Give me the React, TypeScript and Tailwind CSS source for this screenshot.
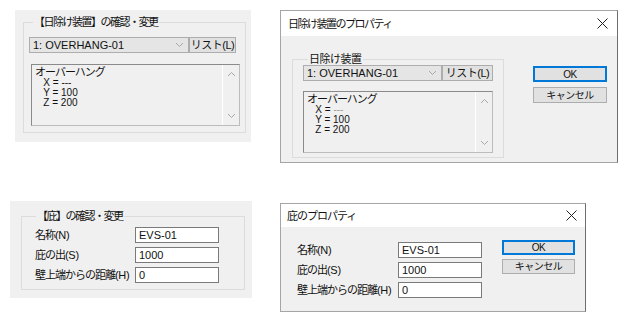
import React from "react";

const F = "font-['Liberation_Sans','Noto_Sans_CJK_JP',sans-serif]";

function Chevron({ up = false, className = "" }: { up?: boolean; className?: string }) {
  return (
    <svg width="9" height="6" viewBox="0 0 9 6" className={className}>
      {up ? (
        <polyline points="1,5 4.5,1.5 8,5" fill="none" stroke="#a8a8a8" strokeWidth="1" />
      ) : (
        <polyline points="1,1 4.5,4.5 8,1" fill="none" stroke="#a8a8a8" strokeWidth="1" />
      )}
    </svg>
  );
}

function CloseX() {
  return (
    <svg width="11" height="11" viewBox="0 0 11 11">
      <line x1="0.5" y1="0.5" x2="10.5" y2="10.5" stroke="#222" strokeWidth="1" />
      <line x1="10.5" y1="0.5" x2="0.5" y2="10.5" stroke="#222" strokeWidth="1" />
    </svg>
  );
}

function Combo({ w, btnW }: { w: string; btnW: string }) {
  return (
    <div className="flex">
      <div className={`${w} h-[16px] bg-[#e5e5e5] border border-[#adadad] flex items-center justify-between pl-[3px] pr-[4px] text-[11px] leading-[12px] text-[#111] whitespace-nowrap`}>
        <span>1: OVERHANG-01</span>
        <Chevron />
      </div>
      <div className={`${btnW} h-[16px] bg-[#e1e1e1] border border-[#adadad] flex items-center justify-center text-[11px] leading-[12px] tracking-[-0.5px] text-[#111] whitespace-nowrap`}>
        リスト(L)
      </div>
    </div>
  );
}

function InfoBox({ w, grayDash = false }: { w: string; grayDash?: boolean }) {
  return (
    <div className={`${w} h-[62px] bg-[#f0f0f0] border border-[#8a8a8a] border-r-[#bcbcbc] border-b-[#bcbcbc] flex`}>
      <div className="flex-1 pl-[3px] pt-[1px] text-[#111]">
        <div className="text-[11px] leading-[12px] tracking-[-1px] whitespace-nowrap">オーバーハング</div>
        <div className="text-[10px] leading-[10px] whitespace-pre">
          {"   X = "}
          <span className={grayDash ? "text-[#9a9a9a]" : ""}>---</span>
        </div>
        <div className="text-[10px] leading-[10px] whitespace-pre">{"   Y = 100"}</div>
        <div className="text-[10px] leading-[10px] whitespace-pre">{"   Z = 200"}</div>
      </div>
      <div className="w-[17px] border-l border-l-white flex flex-col items-center justify-between py-[6px]">
        <Chevron up />
        <Chevron />
      </div>
    </div>
  );
}

function Btn({ children, def = false, w, h }: { children: React.ReactNode; def?: boolean; w: string; h: string }) {
  return (
    <div
      className={`${w} ${h} bg-[#e1e1e1] flex items-center justify-center text-[10px] leading-[11px] tracking-[-0.5px] text-[#111] whitespace-nowrap ${
        def ? "border-2 border-[#0078d7]" : "border border-[#adadad]"
      }`}
    >
      {children}
    </div>
  );
}

function Field({ value, label, key2, labelW }: { value: string; label: string; key2: string; labelW: string }) {
  return (
    <div className="flex items-center h-[16px]">
      <div className={`${labelW} text-[11px] leading-[12px] text-[#111] whitespace-nowrap`}>
        <span className="tracking-[-1px]">{label}</span>
        <span className="tracking-[-0.3px]">{key2}</span>
      </div>
      <div className="w-[84px] h-[16px] bg-white border border-[#7a7a7a] flex items-center pl-[3px] text-[11px] leading-[12px] text-[#111]">
        {value}
      </div>
    </div>
  );
}

export default function App() {
  return (
    <div className={`relative w-[632px] h-[322px] bg-white overflow-hidden ${F}`}>
      {/* Top-left panel */}
      <div className="absolute left-[15px] top-[10px] w-[236px] h-[132px] bg-[#f0f0f0] pt-[6px] pl-[8px] pr-[6px]">
        <fieldset className="border border-[#dcdcdc] h-[117px] px-[5px]">
          <legend className="ml-[4px] px-[1px] text-[11px] leading-[12px] tracking-[-1.5px] text-[#111] whitespace-nowrap">【日除け装置】の確認・変更</legend>
          <div className="mt-[9px]">
            <Combo w="w-[160px]" btnW="w-[47px]" />
          </div>
          <div className="mt-[11px] ml-[2px]">
            <InfoBox w="w-[209px]" />
          </div>
        </fieldset>
      </div>

      {/* Top-right dialog */}
      <div className="absolute left-[280px] top-[10px] w-[338px] h-[153px] border border-[#a5a5a5] border-r-[#6e6e6e] flex flex-col bg-[#f0f0f0]">
        <div className="h-[25px] bg-white flex items-center justify-between pl-[7px] pr-[9px] shrink-0">
          <span className="text-[11px] leading-[12px] tracking-[-1.5px] text-[#111] whitespace-nowrap">日除け装置のプロパティ</span>
          <CloseX />
        </div>
        <div className="flex pl-[11px] pt-[17px]">
          <fieldset className="w-[211px] h-[105px] border border-[#dcdcdc] px-[10px]">
            <legend className="ml-[5px] px-[1px] text-[11px] leading-[12px] tracking-[-0.5px] text-[#111] whitespace-nowrap">日除け装置</legend>
            <Combo w="w-[139px]" btnW="w-[51px]" />
            <div className="mt-[10px]">
              <InfoBox w="w-[190px]" grayDash />
            </div>
          </fieldset>
          <div className="ml-[29px] pt-[13px] flex flex-col gap-[5px]">
            <Btn def w="w-[74px]" h="h-[16px]">OK</Btn>
            <Btn w="w-[74px]" h="h-[16px]">キャンセル</Btn>
          </div>
        </div>
      </div>

      {/* Bottom-left panel */}
      <div className="absolute left-[10px] top-[201px] w-[242px] h-[97px] bg-[#f0f0f0] pt-[9px] pl-[11px]">
        <fieldset className="w-[224px] h-[80px] border border-[#dcdcdc] pl-[13px]">
          <legend className="ml-[1px] px-[1px] text-[11px] leading-[12px] tracking-[-1.5px] text-[#111] whitespace-nowrap">【庇】の確認・変更</legend>
          <div className="mt-[5px] flex flex-col gap-[4px]">
            <Field label="名称" key2="(N)" value="EVS-01" labelW="w-[100px]" />
            <Field label="庇の出" key2="(S)" value="1000" labelW="w-[100px]" />
            <Field label="壁上端からの距離" key2="(H)" value="0" labelW="w-[100px]" />
          </div>
        </fieldset>
      </div>

      {/* Bottom-right dialog */}
      <div className="absolute left-[280px] top-[203px] w-[306px] h-[109px] border border-[#a5a5a5] border-r-[#6e6e6e] flex flex-col bg-[#f0f0f0]">
        <div className="h-[23px] bg-white flex items-center justify-between pl-[6px] pr-[8px] shrink-0">
          <span className="text-[11px] leading-[12px] tracking-[-1px] text-[#111] whitespace-nowrap">庇のプロパティ</span>
          <CloseX />
        </div>
        <div className="flex pl-[16px] pt-[15px]">
          <div className="flex flex-col gap-[4px]">
            <Field label="名称" key2="(N)" value="EVS-01" labelW="w-[101px]" />
            <Field label="庇の出" key2="(S)" value="1000" labelW="w-[101px]" />
            <Field label="壁上端からの距離" key2="(H)" value="0" labelW="w-[101px]" />
          </div>
          <div className="ml-[20px] -mt-[2px] flex flex-col gap-[4px]">
            <Btn def w="w-[73px]" h="h-[15px]">OK</Btn>
            <Btn w="w-[73px]" h="h-[15px]">キャンセル</Btn>
          </div>
        </div>
      </div>
    </div>
  );
}
